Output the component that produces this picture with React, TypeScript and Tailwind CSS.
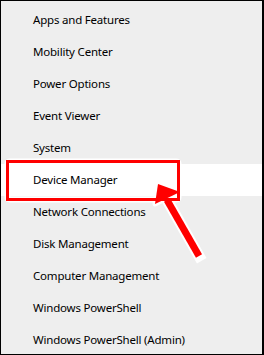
const items = [
  'Apps and Features',
  'Mobility Center',
  'Power Options',
  'Event Viewer',
  'System',
  'Device Manager',
  'Network Connections',
  'Disk Management',
  'Computer Management',
  'Windows PowerShell',
  'Windows PowerShell (Admin)',
];

export default function App() {
  return (
    <div className="relative w-[264px] h-[355px] bg-[#eeeeee] border border-black border-r-2 pt-[2.5px] overflow-hidden">
      <ul className="flex flex-col">
        {items.map((label) => (
          <li
            key={label}
            className={
              'h-[32px] flex items-center pl-[32px] text-[11.5px] tracking-[-0.2px] text-black font-["Noto_Sans",sans-serif] ' +
              (label === 'Device Manager' ? 'bg-white' : '')
            }
          >
            {label}
          </li>
        ))}
      </ul>

      {/* red highlight box + arrow */}
      <svg className="absolute left-0 top-0" width="264" height="355" viewBox="1 1 264 355">
        <rect x="7.5" y="161.5" width="171" height="38" fill="none" stroke="#fff" strokeWidth="6" rx="2" />
        <line x1="167" y1="200" x2="199" y2="256" stroke="#fff" strokeWidth="11" strokeLinecap="square" />
        <polygon points="158,184 180,192 155,204" fill="#fff" stroke="#fff" strokeWidth="5" strokeLinejoin="round" />
        <rect x="7.5" y="161.5" width="171" height="38" fill="none" stroke="#ff0000" strokeWidth="3" />
        <line x1="167" y1="200" x2="199" y2="256" stroke="#ff0000" strokeWidth="7" />
        <polygon points="158,184 180,192 155,204" fill="#ff0000" />
      </svg>
    </div>
  );
}
